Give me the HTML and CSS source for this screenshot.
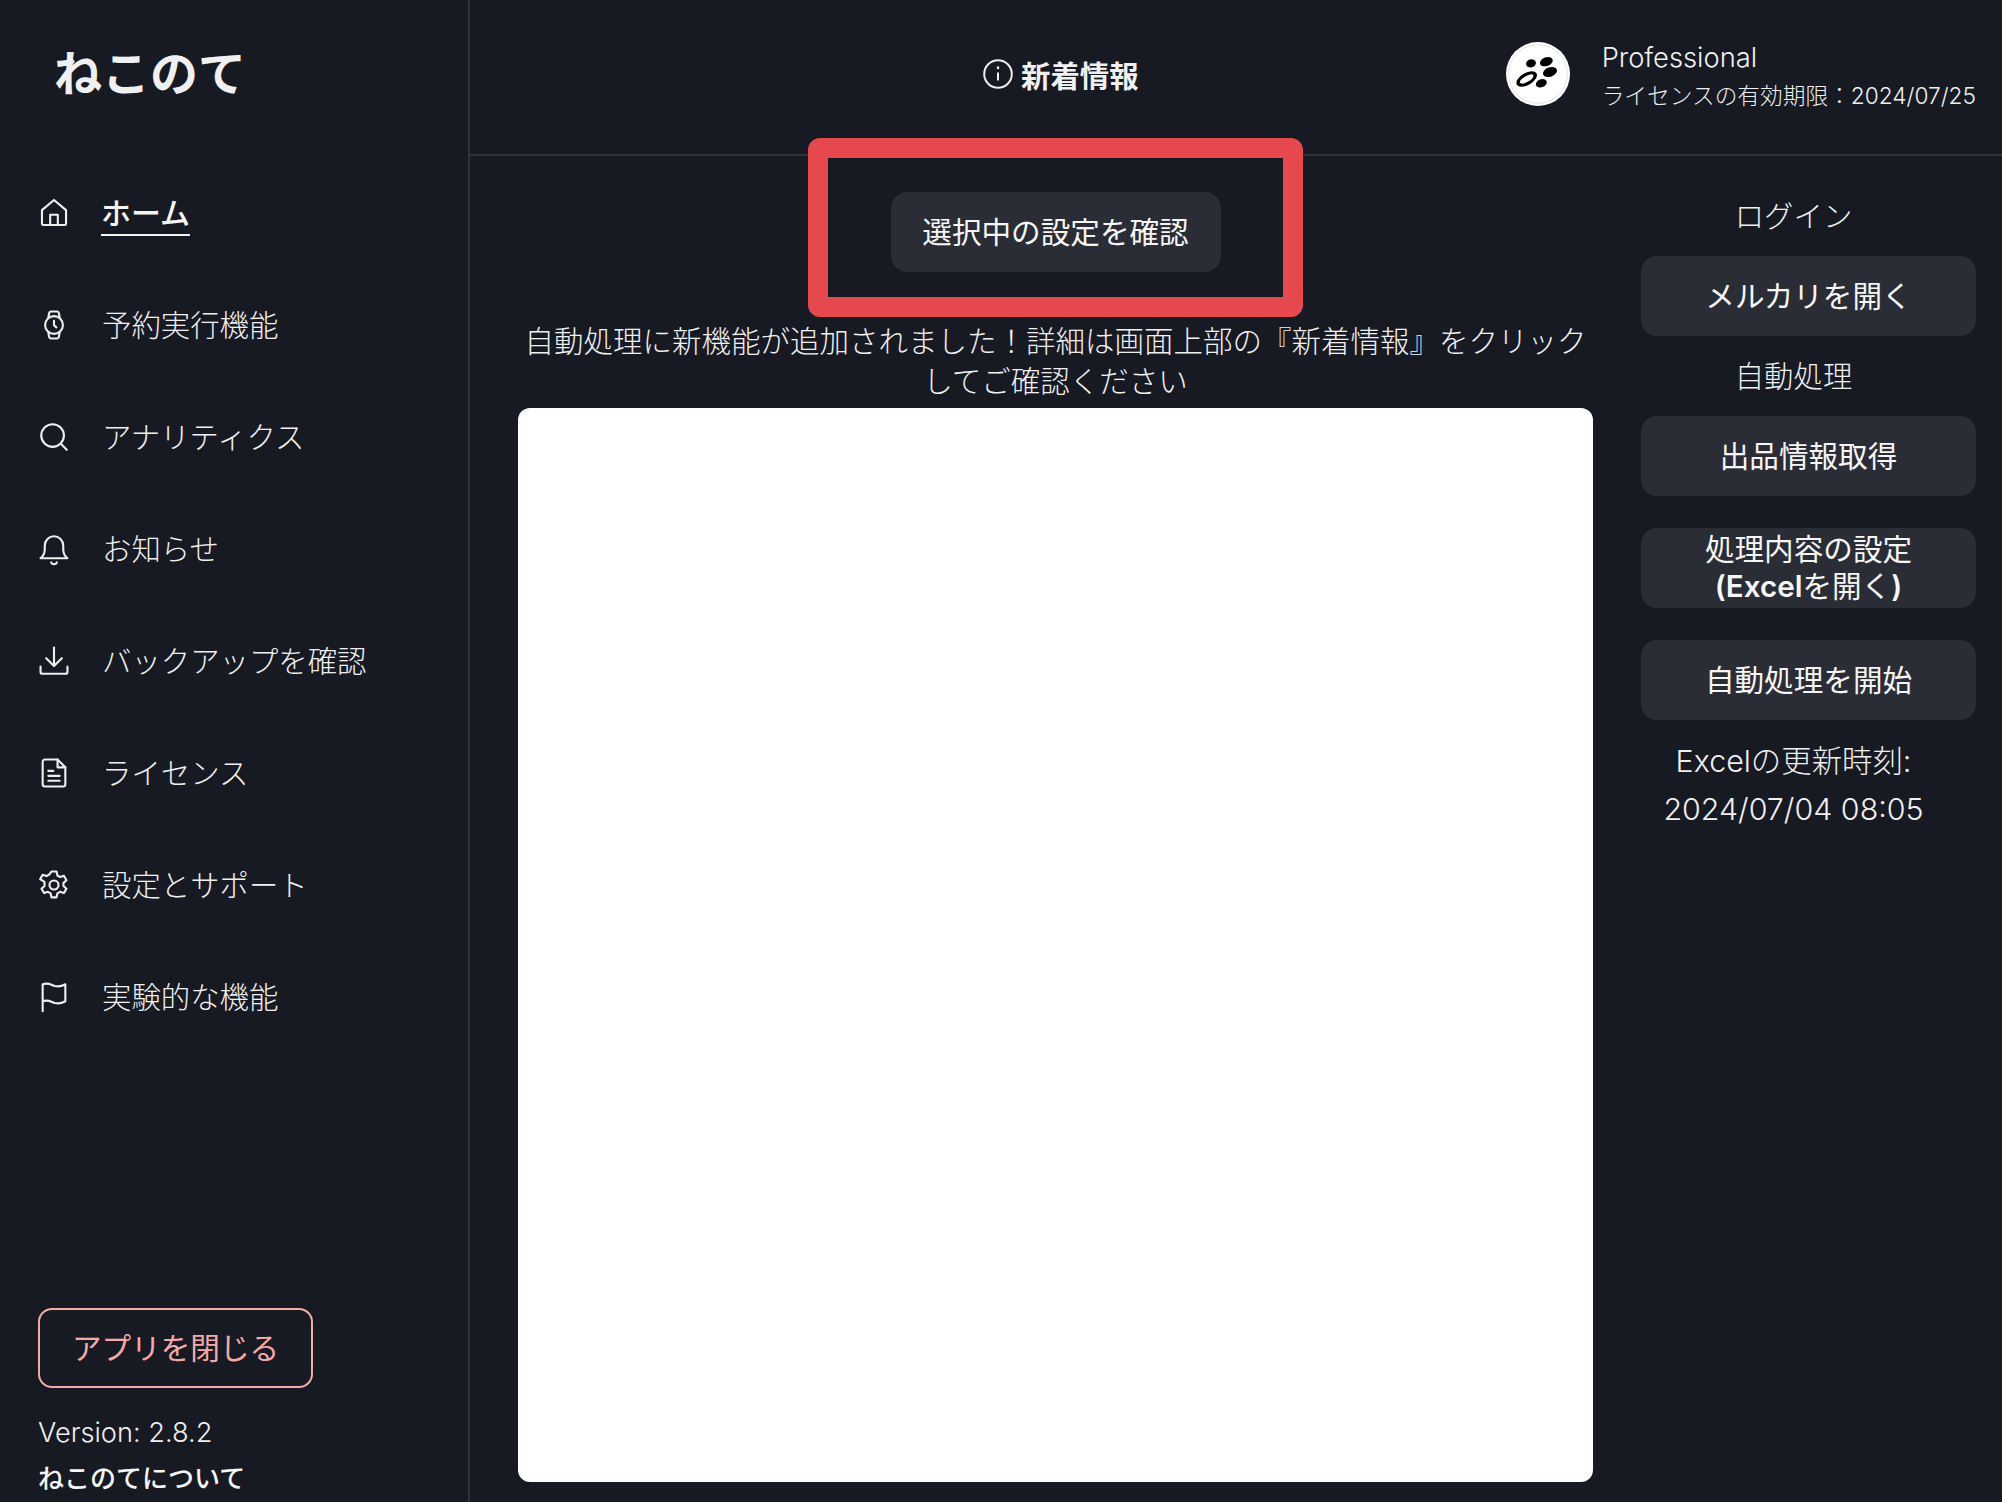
FILE: index.html
```html
<!DOCTYPE html>
<html lang="ja">
<head>
    <meta charset="UTF-8">
    <title>ねこのて</title>
    <link rel="stylesheet" href="styles.css">
</head>
<body>
    <div class="app">
        <aside class="sidebar">
            <div class="brand">ねこのて</div>
            <nav class="nav">
                <a class="nav-item active">
                    <svg class="icon" viewBox="0 0 24 24"><path d="M3.500 19.500V10L12 2.800 20.500 10v9.500a1 1 0 0 1-1 1h-15a1 1 0 0 1-1-1z"/><path d="M9.300 20.500v-7.300h5.400v7.300"/></svg>
                    <span class="nav-label">ホーム</span>
                </a>
                <a class="nav-item">
                    <svg class="icon" viewBox="0 0 24 24"><circle cx="12" cy="12" r="6.300"/><path d="M12 9v3.200l1.700 1.500"/><path d="M8 7l.5-3.200a1.500 1.500 0 0 1 1.400-1.300h4.200a1.500 1.500 0 0 1 1.400 1.300L16 7"/><path d="M8 17l.5 3.200a1.500 1.500 0 0 0 1.400 1.300h4.200a1.500 1.500 0 0 0 1.400-1.300L16 17"/></svg>
                    <span class="nav-label">予約実行機能</span>
                </a>
                <a class="nav-item">
                    <svg class="icon" viewBox="0 0 24 24"><circle cx="11" cy="11" r="8"/><path d="M17 17l4 4"/></svg>
                    <span class="nav-label">アナリティクス</span>
                </a>
                <a class="nav-item">
                    <svg class="icon" viewBox="0 0 24 24"><path d="M2.500 18.500c2-1.600 3-3.500 3-6.500V9.500a6.500 6.500 0 0 1 13 0V12c0 3 1 4.900 3 6.500z"/><path d="M10 21.500a2.200 2.200 0 0 0 4 0"/></svg>
                    <span class="nav-label">お知らせ</span>
                </a>
                <a class="nav-item">
                    <svg class="icon" viewBox="0 0 24 24"><path d="M12 2.500v12.500"/><path d="M6.500 10l5.500 5.500 5.500-5.500"/><path d="M2.500 16v3.500a1.500 1.500 0 0 0 1.500 1.500h16a1.500 1.500 0 0 0 1.500-1.500V16"/></svg>
                    <span class="nav-label">バックアップを確認</span>
                </a>
                <a class="nav-item">
                    <svg class="icon" viewBox="0 0 24 24"><path d="M4 4a1.500 1.500 0 0 1 1.500-1.500h9l5.500 5.500v12a1.500 1.500 0 0 1-1.500 1.500h-13A1.500 1.500 0 0 1 4 20z"/><path d="M14.500 2.500V8H20"/><path d="M8 10.500h3.500M8 14h8M8 17.500h8"/></svg>
                    <span class="nav-label">ライセンス</span>
                </a>
                <a class="nav-item">
                    <svg class="icon" viewBox="0 0 24 24"><circle cx="12" cy="12" r="3.200"/><path d="M10.200 2.500h3.600l.6 2.800 1.900 1.100 2.700-.9 1.800 3.100-2.100 1.900v2.200l2.100 1.900-1.800 3.100-2.700-.9-1.900 1.100-.6 2.800h-3.600l-.6-2.800-1.900-1.100-2.700.9-1.800-3.100 2.100-1.900V9.800L2.200 7.900 4 4.800l2.700.9 1.900-1.100z"/></svg>
                    <span class="nav-label">設定とサポート</span>
                </a>
                <a class="nav-item">
                    <svg class="icon" viewBox="0 0 24 24"><path d="M4 22V3c4-1.500 6 .5 8.500 1.200 2.500.6 5 .2 7.500-1.200v12c-2.500 1.400-5 1.800-7.500 1.200C10 15.500 8 13.500 4 15"/></svg>
                    <span class="nav-label">実験的な機能</span>
                </a>
            </nav>
            <div class="side-foot">
                <button class="close-btn">アプリを閉じる</button>
                <div class="version">Version: 2.8.2</div>
                <div class="about">ねこのてについて</div>
            </div>
        </aside>

        <div class="main">
            <header class="topbar">
                <div class="news">
                    <svg class="info" viewBox="0 0 30 30"><circle cx="15" cy="15" r="13.800"/><path d="M15 13.500v8"/><path class="dot" d="M15 8.500v.6"/></svg>
                    <span>新着情報</span>
                </div>
                <div class="account">
                    <svg class="avatar" viewBox="45 39 192 192">
                        <circle cx="141" cy="135" r="96" fill="#fff"/>
                        <circle cx="141" cy="135" r="88" fill="none" stroke="#c9c9c9" stroke-width="1.500"/>
                        <ellipse cx="120" cy="103" rx="15" ry="12" transform="rotate(-15 120 103)"/>
                        <ellipse cx="166" cy="98" rx="20" ry="13" transform="rotate(-20 166 98)"/>
                        <ellipse cx="177" cy="129" rx="22" ry="14" transform="rotate(-20 177 129)"/>
                        <ellipse cx="151" cy="163" rx="17" ry="12" transform="rotate(-20 151 163)"/>
                        <ellipse cx="107" cy="150" rx="34" ry="18" transform="rotate(-30 107 150)"/>
                        <ellipse cx="107" cy="150" rx="23" ry="9" fill="#fff" transform="rotate(-30 107 150)"/>
                    </svg>
                    <div class="account-text">
                        <div class="plan">Professional</div>
                        <div class="expiry">ライセンスの有効期限：2024/07/25</div>
                    </div>
                </div>
            </header>

            <div class="content">
                <section class="center">
                    <button class="btn check-btn">選択中の設定を確認</button>
                    <p class="notice">自動処理に新機能が追加されました！詳細は画面上部の『新着情報』をクリックしてご確認ください</p>
                    <div class="panel"></div>
                    <div class="highlight"></div>
                </section>
                <section class="actions">
                    <div class="label">ログイン</div>
                    <button class="btn">メルカリを開く</button>
                    <div class="label">自動処理</div>
                    <button class="btn">出品情報取得</button>
                    <button class="btn btn-gap two-line">処理内容の設定<br><b>(Excel</b>を開く<b>)</b></button>
                    <button class="btn btn-gap">自動処理を開始</button>
                    <div class="updated">Excelの更新時刻:<br>2024/07/04 08:05</div>
                </section>
            </div>
        </div>
    </div>
</body>
</html>
```

FILE: styles.css
```css
* { box-sizing: border-box; }
html, body { margin: 0; height: 100%; }
body { font-family: Inter, "Noto Sans CJK JP", sans-serif; background-color: #171923; color: #f0f0f0; overflow: hidden; }
.app { display: flex; height: 100vh; }

.sidebar { width: 470px; flex: none; border-right: 2px solid #2e3240; padding: 0 38px; display: flex; flex-direction: column; }
.brand { font-size: 48px; font-weight: 700; line-height: 60px; margin: 44px 0 0 16px; }
.nav { margin-top: 85px; display: flex; flex-direction: column; gap: 64px; }
.nav-item { display: flex; align-items: center; gap: 31px; height: 48px; font-size: 29.4px; font-weight: 300; color: #f0f0f0; }
.nav-label { margin-bottom: 4px; }
.nav-item.active { font-size: 30px; font-weight: 500; color: #f4f4f4; }
.nav-item.active .nav-label { border-bottom: 2px solid #f4f4f4; line-height: 41px; margin: 2px 0 0 -1px; }
.icon { width: 34px; height: 34px; flex: none; margin-left: -1px; fill: none; stroke: #eeeeee; stroke-width: 1.5; stroke-linecap: round; stroke-linejoin: round; }

.side-foot { margin-top: auto; padding-bottom: 3px; }
.close-btn { display: block; width: 275px; height: 80px; padding: 0 0 3px; background: none; border: 2px solid #f5aaaa; border-radius: 14px; color: #f5aaaa; font: 400 29.6px Inter, "Noto Sans CJK JP", sans-serif; }
.version { font-size: 27.2px; font-weight: 300; line-height: 40px; margin-top: 25px; color: #f0f0f0; }
.about { font-size: 26px; font-weight: 500; line-height: 40px; margin-top: 6px; color: #f5f5f5; }

.main { flex: 1; min-width: 0; display: flex; flex-direction: column; }
.topbar { height: 156px; flex: none; border-bottom: 2px solid #2e3240; display: flex; align-items: center; justify-content: flex-end; padding: 0 26px 6px 48px; }
.news { display: flex; align-items: center; gap: 8px; font-size: 29.4px; font-weight: 700; margin-right: 367px; }
.info { width: 30px; height: 30px; fill: none; stroke: #eeeeee; stroke-width: 2; }
.info .dot { stroke-linecap: round; stroke-width: 2.500; }
.account { display: flex; align-items: center; gap: 32px; }
.avatar { width: 64px; height: 64px; flex: none; }
.account-text { padding-top: 6px; }
.plan { font-size: 27.3px; font-weight: 300; line-height: 38px; }
.expiry { font-size: 22.7px; font-weight: 300; line-height: 38px; color: #efefef; }

.content { flex: 1; min-height: 0; display: flex; padding: 36px 26px 0 48px; gap: 48px; }
.center { width: 1075px; flex: none; display: flex; flex-direction: column; align-items: center; position: relative; }
.btn { display: block; width: 100%; height: 80px; padding: 0; border: none; border-radius: 16px; background-color: #2a2d35; color: #f6f6f6; font: 400 29.6px/40px Inter, "Noto Sans CJK JP", sans-serif; }
.check-btn { width: 330px; }
.notice { margin: 49px 0 7px; font-size: 29.5px; font-weight: 300; line-height: 40px; text-align: center; color: #f0f0f0; }
.panel { width: 100%; height: 1074px; background-color: #ffffff; border-radius: 12px; flex: none; }
.highlight { position: absolute; left: 290px; top: -54px; width: 495px; height: 179px; border: 20px solid #e5494d; border-radius: 12px; }

.actions { width: 335px; flex: none; }
.label { width: 305px; height: 64px; padding-top: 1px; font-size: 29.4px; font-weight: 300; line-height: 48px; text-align: center; color: #f0f0f0; }
.actions .btn + .label { height: 80px; line-height: 80px; }
.btn-gap { margin-top: 32px; }
.two-line { line-height: 37px; }
.two-line b { font-weight: 600; }
.updated { width: 305px; margin-top: 17px; font-size: 30.4px; font-weight: 300; line-height: 48px; text-align: center; color: #f0f0f0; }
```
